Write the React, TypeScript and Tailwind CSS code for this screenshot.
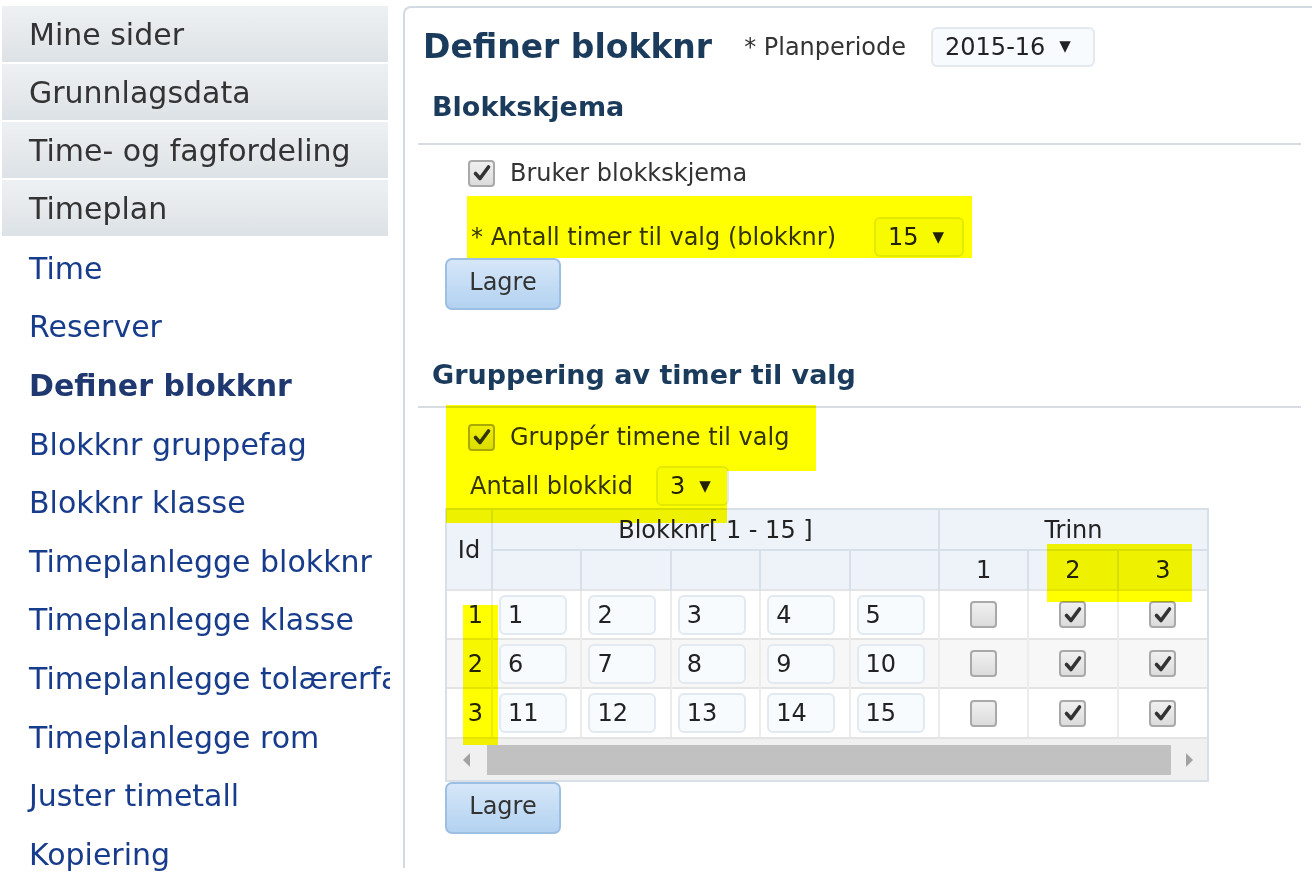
import React from 'react';

const menuHeaders = ['Mine sider', 'Grunnlagsdata', 'Time- og fagfordeling', 'Timeplan'];
const menuLinks = [
  'Time',
  'Reserver',
  'Definer blokknr',
  'Blokknr gruppefag',
  'Blokknr klasse',
  'Timeplanlegge blokknr',
  'Timeplanlegge klasse',
  'Timeplanlegge tolærerfag',
  'Timeplanlegge rom',
  'Juster timetall',
  'Kopiering',
];

const rows = [
  { id: 1, values: [1, 2, 3, 4, 5], trinn: [false, true, true] },
  { id: 2, values: [6, 7, 8, 9, 10], trinn: [false, true, true] },
  { id: 3, values: [11, 12, 13, 14, 15], trinn: [false, true, true] },
];

const blokkCols = ['w-[91px]', 'w-[91px]', 'w-[91px]', 'w-[89px]', 'w-[88px]'];
const trinnCols = ['w-[90px]', 'w-[88px]', 'w-[91px]'];

// Old-style grey checkbox
const Checkbox: React.FC<{ checked?: boolean }> = ({ checked }) => (
  <span className="inline-flex w-[27px] h-[27px] rounded-[4px] border-2 border-[#a9a9a9] bg-gradient-to-b from-[#f0f0f0] to-[#dcdcdc] items-center justify-center shrink-0">
    {checked && (
      <svg width="20" height="20" viewBox="0 0 20 20">
        <path d="M3.5 10.5 L8 15.5 L16.5 4" fill="none" stroke="#333" strokeWidth="3.6" strokeLinecap="round" strokeLinejoin="round" />
      </svg>
    )}
  </span>
);

const Select: React.FC<{ value: string; className?: string }> = ({ value, className }) => (
  <span className={`inline-flex items-center gap-[14px] h-[40px] pl-[12px] rounded-[6px] border-2 border-[#e3e9ef] bg-[#f8fbfe] text-[#222] ${className || ''}`}>
    <span>{value}</span>
    <span className="text-[15px] leading-none">▼</span>
  </span>
);

const LagreButton: React.FC = () => (
  <button className="w-[116px] h-[52px] rounded-[7px] border-2 border-[#9dbfe3] bg-gradient-to-b from-[#d6e7f8] to-[#b3d2f1] text-[24px] text-[#333] pb-[4px]">
    Lagre
  </button>
);

const Highlight: React.FC<{ className: string }> = ({ className }) => (
  <div className={`absolute bg-[#ffff00] mix-blend-multiply pointer-events-none ${className}`} />
);

export default function App() {
  return (
    <div className="relative w-[1312px] h-[880px] bg-white overflow-hidden font-['DejaVu_Sans',sans-serif] flex">
      {/* Sidebar */}
      <aside className="w-[390px] shrink-0 pt-[6px] pl-[2px] overflow-hidden">
        <div className="w-[386px] flex flex-col gap-[2px]">
          {menuHeaders.map((h) => (
            <div
              key={h}
              className="h-[56px] flex items-center pl-[27px] bg-gradient-to-b from-[#eef1f3] to-[#dde2e6] text-[30px] text-[#333] whitespace-nowrap"
            >
              {h}
            </div>
          ))}
        </div>
        <div className="flex flex-col pt-[3px]">
          {menuLinks.map((l) => (
            <div
              key={l}
              className={`h-[58.6px] flex items-center pl-[27px] text-[30px] whitespace-nowrap ${
                l === 'Definer blokknr' ? 'font-bold text-[#1f3870]' : 'text-[#183c8c]'
              }`}
            >
              {l}
            </div>
          ))}
        </div>
      </aside>

      {/* Main panel */}
      <main className="ml-[13px] mt-[6px] h-[862px] flex-1 border-l-2 border-t-2 border-[#d3dae2] rounded-tl-[8px] pl-[13px] pr-[11px] text-[24px] text-[#333]">
        <div className="h-[77px] flex items-center">
          <h1 className="ml-[5px] text-[33px] font-bold text-[#1b3b5c]">Definer blokknr</h1>
          <span className="ml-[32px] text-[#333]">* Planperiode</span>
          <Select value="2015-16" className="ml-[25px] w-[164px]" />
        </div>
        <div className="h-[58px] flex items-center pb-[14px] pl-[14px] text-[27px] font-bold text-[#1b3b5c]">Blokkskjema</div>
        <div className="h-[2px] bg-[#d6dce2]" />

        {/* Blokkskjema section */}
        <div className="pl-[50px] h-[56px] flex items-center gap-[15px]">
          <Checkbox checked />
          <span>Bruker blokkskjema</span>
        </div>
        <div className="pl-[53px] h-[57px] flex items-center pt-[15px]">
          <span>* Antall timer til valg (blokknr)</span>
          <Select value="15" className="ml-[38px] w-[90px]" />
        </div>
        <div className="pl-[27px]">
          <LagreButton />
        </div>

        {/* Gruppering section */}
        <div className="h-[96px] flex items-end pb-[11px] pl-[14px] text-[27px] font-bold text-[#1b3b5c]">
          Gruppering av timer til valg
        </div>
        <div className="h-[2px] bg-[#d6dce2]" />
        <div className="pl-[50px] h-[58px] flex items-center gap-[15px]">
          <Checkbox checked />
          <span>Gruppér timene til valg</span>
        </div>
        <div className="pl-[52px] h-[40px] flex items-center">
          <span>Antall blokkid</span>
          <Select value="3" className="ml-[23px] w-[73px]" />
        </div>

        {/* Table */}
        <div className="ml-[27px] mt-[2px] w-[764px] border-2 border-[#d7dfe8]">
          <table className="border-collapse table-fixed w-[760px]">
            <thead className="bg-[#eef2f9] text-[#222]">
              <tr className="h-[40px]">
                <th rowSpan={2} className="w-[45px] font-normal border-r-2 border-[#d7dfe8] align-middle">Id</th>
                <th colSpan={5} className="font-normal border-r-2 border-b-2 border-[#d7dfe8]">Blokknr[ 1 - 15 ]</th>
                <th colSpan={3} className="font-normal border-b-2 border-[#d7dfe8]">Trinn</th>
              </tr>
              <tr className="h-[40px]">
                {blokkCols.map((w, i) => (
                  <th key={i} className={`${w} border-r-2 border-[#d7dfe8]`} />
                ))}
                {trinnCols.map((w, i) => (
                  <th key={i} className={`${w} font-normal ${i < 2 ? 'border-r-2 border-[#d7dfe8]' : ''}`}>
                    {i + 1}
                  </th>
                ))}
              </tr>
            </thead>
            <tbody>
              {rows.map((r, ri) => (
                <tr key={r.id} className={`h-[49px] border-t-2 border-[#e4e4e4] ${ri === 1 ? 'bg-[#f7f7f7]' : 'bg-white'}`}>
                  <td className="text-right pr-[8px] border-r-2 border-[#ececec] text-[#222]">{r.id}</td>
                  {r.values.map((v, i) => (
                    <td key={i} className="pl-[6px] border-r-2 border-[#ececec]">
                      <div className="w-[68px] h-[40px] flex items-center pl-[7px] rounded-[6px] border-2 border-[#e2e9f0] bg-[#f7fbfe] text-[#222]">
                        {v}
                      </div>
                    </td>
                  ))}
                  {r.trinn.map((c, i) => (
                    <td key={i} className={`text-center ${i < 2 ? 'border-r-2 border-[#ececec]' : ''}`}>
                      <div className="flex justify-center">
                        <Checkbox checked={c} />
                      </div>
                    </td>
                  ))}
                </tr>
              ))}
            </tbody>
          </table>
          {/* Horizontal scrollbar */}
          <div className="h-[43px] bg-[#f0f0f0] border-t-2 border-[#e4e4e4] flex items-center">
            <div className="w-[40px] flex justify-center">
              <svg width="10" height="16" viewBox="0 0 10 16"><path d="M8 1 L1 8 L8 15 Z" fill="#a3a3a3" /></svg>
            </div>
            <div className="w-[684px] h-[30px] bg-[#c1c1c1]" />
            <div className="flex-1 flex justify-center">
              <svg width="10" height="16" viewBox="0 0 10 16"><path d="M2 1 L9 8 L2 15 Z" fill="#a3a3a3" /></svg>
            </div>
          </div>
        </div>
        <div className="pl-[27px]">
          <LagreButton />
        </div>
      </main>

      {/* Yellow marker annotations */}
      <Highlight className="left-[467px] top-[196px] w-[505px] h-[62px]" />
      <Highlight className="left-[446px] top-[405px] w-[370px] h-[66px]" />
      <Highlight className="left-[446px] top-[471px] w-[281px] h-[52px]" />
      <Highlight className="left-[1047px] top-[544px] w-[145px] h-[58px]" />
      <Highlight className="left-[463px] top-[605px] w-[35px] h-[140px]" />
    </div>
  );
}
